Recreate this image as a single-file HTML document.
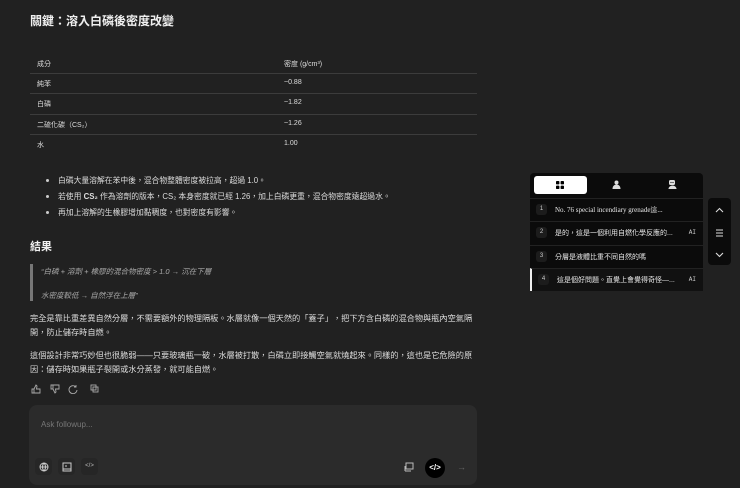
<!DOCTYPE html>
<html><head><meta charset="utf-8"><style>
*{margin:0;padding:0;box-sizing:border-box}
body{width:740px;height:488px;background:#212121;color:#e6e6e6;font-family:"Liberation Sans","Noto Sans CJK TC",sans-serif;position:relative;overflow:hidden;font-size:7.5px}
.a{position:absolute;white-space:nowrap}
h1{position:absolute;left:30px;top:12px;font-size:12px;font-weight:bold;color:#f0f0f0}
h2{position:absolute;left:30px;top:238px;font-size:11px;font-weight:bold;color:#f0f0f0}
.line{position:absolute;left:30px;width:447px;height:1px;background:#3c3c3c}
.tb{font-size:7px;color:#ddd}
.li{font-size:7.8px;color:#ddd}
.dot{position:absolute;width:3px;height:3px;background:#ccc;border-radius:50%}
.q{font-style:italic;color:#aaa;font-size:7.5px}
.p{font-size:8.2px;color:#ddd;line-height:13.5px;width:450px;white-space:normal}
.panel{position:absolute;left:530px;top:173px;width:173px;height:118px;background:#0b0b0b;border-radius:4px}
.row{position:absolute;left:0;width:173px;height:23px;border-top:1px solid #222}
.num{position:absolute;left:6px;top:5px;width:11px;height:11px;background:#1c1c1c;border-radius:3px;font-size:6px;color:#ccc;text-align:center;line-height:11px}
.rt{position:absolute;left:25px;top:6px;font-size:7px;color:#e8e8e8;white-space:nowrap}
.ai{position:absolute;right:7px;top:7px;font-size:6px;color:#ccc;font-family:"Liberation Mono",monospace}
svg{position:absolute}
</style></head><body>
<h1>關鍵：溶入白磷後密度改變</h1>
<div class="a tb" style="left:37px;top:59px">成分</div>
<div class="a tb" style="left:284px;top:59px">密度 (g/cm³)</div>
<div class="line" style="top:73px"></div>
<div class="a tb" style="left:37px;top:79px">純苯</div><div class="a tb" style="left:284px;top:79px">~0.88</div>
<div class="line" style="top:93px"></div>
<div class="a tb" style="left:37px;top:99px">白磷</div><div class="a tb" style="left:284px;top:99px">~1.82</div>
<div class="line" style="top:114px"></div>
<div class="a tb" style="left:37px;top:120px">二硫化碳（CS₂）</div><div class="a tb" style="left:284px;top:120px">~1.26</div>
<div class="line" style="top:134px"></div>
<div class="a tb" style="left:37px;top:140px">水</div><div class="a tb" style="left:284px;top:140px">1.00</div>

<div class="dot" style="left:46px;top:179px"></div><div class="a li" style="left:58px;top:175px">白磷大量溶解在苯中後，混合物整體密度被拉高，超過 1.0。</div>
<div class="dot" style="left:46px;top:195px"></div><div class="a li" style="left:58px;top:191px">若使用 <b>CS₂</b> 作為溶劑的版本，CS₂ 本身密度就已經 1.26，加上白磷更重，混合物密度遠超過水。</div>
<div class="dot" style="left:46px;top:211px"></div><div class="a li" style="left:58px;top:207px">再加上溶解的生橡膠增加黏稠度，也對密度有影響。</div>

<h2>結果</h2>
<div class="a" style="left:30px;top:264px;width:3px;height:37px;background:#777"></div>
<div class="a q" style="left:41px;top:266px">“白磷 + 溶劑 + 橡膠的混合物密度 &gt; 1.0 → 沉在下層</div>
<div class="a q" style="left:41px;top:290px">水密度較低 → 自然浮在上層”</div>
<div class="a p" style="left:30px;top:312px">完全是靠比重差異自然分層，不需要額外的物理隔板。水層就像一個天然的「蓋子」，把下方含白磷的混合物與瓶內空氣隔開，防止儲存時自燃。</div>
<div class="a p" style="left:30px;top:349px">這個設計非常巧妙但也很脆弱——只要玻璃瓶一破，水層被打散，白磷立即接觸空氣就燒起來。同樣的，這也是它危險的原因：儲存時如果瓶子裂開或水分蒸發，就可能自燃。</div>
<svg style="left:31px;top:384px" width="70" height="10" viewBox="0 0 70 10" fill="none" stroke="#aaa" stroke-width="0.9">
<path d="M1 5h2v4H1zM3 5l2-4 1 1-.5 3H9v4H3"/>
<path d="M20 5h2V1h-2zM22 5l2 4 1-1-.5-3H28V1h-6"/>
<path d="M45 3a4 4 0 1 0 1 3M45 1v2h-2"/>
<rect x="60" y="1" width="5" height="5"/><rect x="62" y="3" width="5" height="5"/>
</svg>

<div class="a" style="left:29px;top:405px;width:448px;height:80px;background:#2b2b2b;border-radius:8px"></div>
<div class="a" style="left:41px;top:420px;font-size:8px;color:#777">Ask followup...</div>
<div class="a" style="left:35px;top:458px;width:17px;height:17px;border-radius:4px;background:#262626"></div>
<svg style="left:39px;top:462px" width="10" height="10" viewBox="0 0 10 10" fill="none" stroke="#ccc" stroke-width="1"><circle cx="5" cy="5" r="4"/><path d="M1 5h8M5 1c-2 2-2 6 0 8M5 1c2 2 2 6 0 8"/></svg>
<div class="a" style="left:58px;top:458px;width:17px;height:17px;border-radius:4px;background:#262626"></div>
<svg style="left:62px;top:462px" width="10" height="10" viewBox="0 0 10 10" fill="none" stroke="#ccc" stroke-width="1"><rect x="1" y="1" width="8" height="8"/><path d="M1 7h8M3 4h2"/></svg>
<div class="a" style="left:81px;top:458px;width:17px;height:17px;border-radius:4px;background:#262626;color:#bbb;font-size:6px;text-align:center;line-height:17px">&lt;/&gt;</div>
<svg style="left:404px;top:462px" width="10" height="10" viewBox="0 0 10 10" fill="none" stroke="#bbb" stroke-width="1"><rect x="2" y="1" width="7" height="6"/><path d="M1 9h6M1 4v5"/></svg>
<div class="a" style="left:425px;top:458px;width:20px;height:20px;border-radius:50%;background:#000;color:#fff;font-size:8px;font-weight:bold;text-align:center;line-height:20px">&lt;/&gt;</div>
<div class="a" style="left:452px;top:458px;width:19px;height:19px;border-radius:4px;color:#666;font-size:9px;text-align:center;line-height:19px">→</div>

<div class="panel">
 <div class="a" style="left:4px;top:3px;width:53px;height:18px;background:#fff;border-radius:3px"></div>
 <svg style="left:26px;top:8px" width="8" height="8" viewBox="0 0 8 8" fill="#000"><rect x="0" y="0" width="3.4" height="3.4" rx=".8"/><rect x="4.6" y="0" width="3.4" height="3.4" rx=".8"/><rect x="0" y="4.6" width="3.4" height="3.4" rx=".8"/><rect x="4.6" y="4.6" width="3.4" height="3.4" rx=".8"/></svg>
 <svg style="left:82px;top:7px" width="9" height="9" viewBox="0 0 9 9" fill="#ddd"><circle cx="4.5" cy="2.5" r="2"/><path d="M0.5 9c0-3 2-4.5 4-4.5s4 1.5 4 4.5z"/></svg>
 <svg style="left:138px;top:7px" width="9" height="9" viewBox="0 0 9 9" fill="#ddd"><rect x="1" y="0" width="6" height="5" rx="1.5"/><path d="M0.5 9c0-2 2-3.5 4-3.5s4 1.5 4 3.5z"/><rect x="2.5" y="2" width="1" height="1" fill="#000"/><rect x="4.5" y="2" width="1" height="1" fill="#000"/></svg>
 <div class="row" style="top:25px"><div class="num">1</div><div class="rt" style="font-family:'Liberation Serif',serif">No. 76 special incendiary grenade這...</div></div>
 <div class="row" style="top:48px"><div class="num">2</div><div class="rt">是的，這是一個利用自燃化學反應的...</div><div class="ai">AI</div></div>
 <div class="row" style="top:72px"><div class="num">3</div><div class="rt">分層是液體比重不同自然的嗎</div></div>
 <div class="row" style="top:95px;background:#111;border-left:2px solid #eee"><div class="num">4</div><div class="rt">這是個好問題。直覺上會覺得奇怪—...</div><div class="ai">AI</div></div>
</div>
<div class="a" style="left:708px;top:198px;width:23px;height:67px;background:#0b0b0b;border-radius:4px"></div>
<svg style="left:714px;top:205px" width="11" height="55" viewBox="0 0 11 55" fill="none" stroke="#ddd" stroke-width="1.1"><path d="M2 7l3.5-3.5L9 7"/><path d="M2 25h7M2 28h7M2 31h7"/><path d="M2 48l3.5 3.5L9 48"/></svg>
</body></html>
